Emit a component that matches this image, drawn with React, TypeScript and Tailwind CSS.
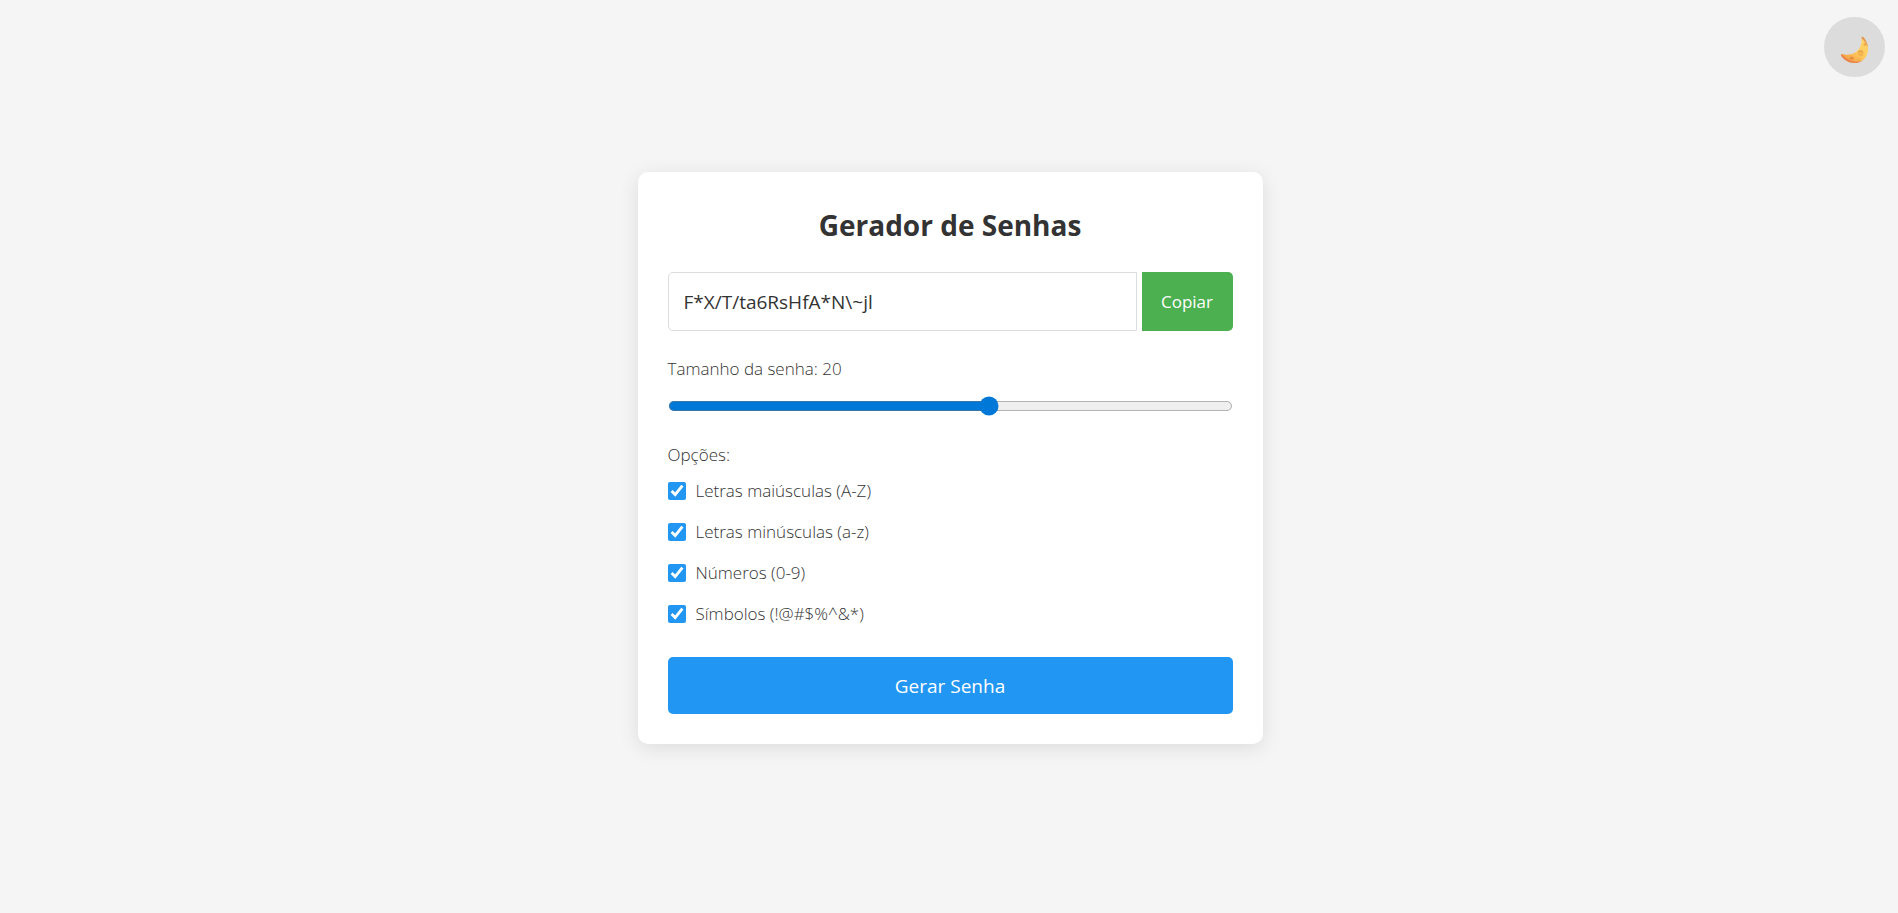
import { useState } from "react";

const OPTIONS = [
  { id: "upper", label: "Letras maiúsculas (A-Z)" },
  { id: "lower", label: "Letras minúsculas (a-z)" },
  { id: "numbers", label: "Números (0-9)" },
  { id: "symbols", label: "Símbolos (!@#$%^&*)" },
];

function MoonIcon() {
  return (
    <svg viewBox="0 0 90 90" className="h-[29px] w-[29px]" aria-hidden="true">
      <defs>
        <linearGradient id="moon" x1="0.9" y1="0.1" x2="0.25" y2="1">
          <stop offset="0" stopColor="#fbd36a" />
          <stop offset="0.5" stopColor="#ffcc5e" />
          <stop offset="1" stopColor="#f39a45" />
        </linearGradient>
      </defs>
      <path
        d="M67 4 C69 1 72 2 74 5 C84 18 89 31 87 46 C84 68 67 84 45 84 C27 84 11 74 3 60 C2 57 4 55 7 56 C25 60 42 58 54 46 C65 35 68 21 67 4 Z"
        fill="url(#moon)"
      />
      <path d="M67 4 C69 1 72 2 74 5 C81 14 86 25 87 36 C82 23 76 14 67 8 Z" fill="#d98a54" opacity="0.8" />
      <path d="M3 60 C11 74 27 84 45 84 C55 84 64 81 71 75 C52 85 24 78 7 57 Z" fill="#e47a4d" opacity="0.75" />
      <circle cx="64" cy="54" r="9" fill="#f3b552" />
      <path d="M57 50 C60 44 68 44 72 50" fill="none" stroke="#d9964a" strokeWidth="3" />
      <ellipse cx="78" cy="26" rx="5" ry="5" fill="#efaa50" />
      <ellipse cx="36" cy="69" rx="7" ry="5" fill="#e78f45" />
      <circle cx="58" cy="73" r="3" fill="#eda54d" />
    </svg>
  );
}

export default function App() {
  const [password, setPassword] = useState("F*X/T/ta6RsHfA*N\\~jl");
  const [length, setLength] = useState(20);
  const [enabled, setEnabled] = useState<Record<string, boolean>>({
    upper: true,
    lower: true,
    numbers: true,
    symbols: true,
  });

  const generate = () => {
    const sets: Record<string, string> = {
      upper: "ABCDEFGHIJKLMNOPQRSTUVWXYZ",
      lower: "abcdefghijklmnopqrstuvwxyz",
      numbers: "0123456789",
      symbols: "!@#$%^&*/\\~",
    };
    const chars = OPTIONS.filter((o) => enabled[o.id]).map((o) => sets[o.id]).join("");
    if (!chars) return;
    setPassword(Array.from({ length }, () => chars[Math.floor(Math.random() * chars.length)]).join(""));
  };

  return (
    <div className="relative flex min-h-screen items-center justify-center bg-[#f5f5f5] pt-[18px] pb-4 pl-0.5 font-['Segoe_UI','Open_Sans',sans-serif] text-[#333]">
      <button
        type="button"
        aria-label="Alternar tema"
        className="absolute top-[17px] right-[13px] flex h-[60px] w-[61px] items-center justify-center rounded-full bg-[#dcdcdc] pt-1.5"
      >
        <MoonIcon />
      </button>

      <main className="w-full max-w-[625px] rounded-[10px] bg-white p-[30px] shadow-[0_4px_20px_rgba(0,0,0,0.1)]">
        <h1 className="mb-6 text-center text-[28px] leading-[46px] font-bold">Gerador de Senhas</h1>

        <div className="mb-6 flex gap-[5px]">
          <input
            type="text"
            readOnly
            aria-label="Senha gerada"
            value={password}
            className="h-[59px] min-w-0 flex-1 rounded-l-[5px] border border-[#ddd] bg-white px-[15px] pt-0.5 text-[19px] outline-none"
          />
          <button
            type="button"
            onClick={() => navigator.clipboard?.writeText(password)}
            className="w-[91px] rounded-r-[5px] bg-[#4caf50] pt-0.5 text-[17px] text-white"
          >
            Copiar
          </button>
        </div>

        <label htmlFor="length" className="mb-[13px] block text-[17px] leading-7 font-light text-[#333]">
          Tamanho da senha: {length}
        </label>
        <input
          id="length"
          type="range"
          min={4}
          max={32}
          value={length}
          onChange={(e) => setLength(Number(e.target.value))}
          className="mb-5 block h-4 w-full accent-[#0078d7] [zoom:1.25]"
        />

        <fieldset>
          <legend className="mb-2 text-[17px] leading-7 font-light text-[#333]">Opções:</legend>
          <div className="flex flex-col gap-[13px]">
            {OPTIONS.map((o) => (
              <label key={o.id} className="flex items-center gap-[10px] text-[17px] leading-7 font-light text-[#333]">
                <input
                  type="checkbox"
                  checked={enabled[o.id]}
                  onChange={(e) => setEnabled({ ...enabled, [o.id]: e.target.checked })}
                  className="h-[18px] w-[18px] accent-[#2196f3]"
                />
                {o.label}
              </label>
            ))}
          </div>
        </fieldset>

        <button
          type="button"
          onClick={generate}
          className="mt-[29px] h-[57px] w-full rounded-[5px] bg-[#2196f3] pt-0.5 text-[19px] text-white"
        >
          Gerar Senha
        </button>
      </main>
    </div>
  );
}
